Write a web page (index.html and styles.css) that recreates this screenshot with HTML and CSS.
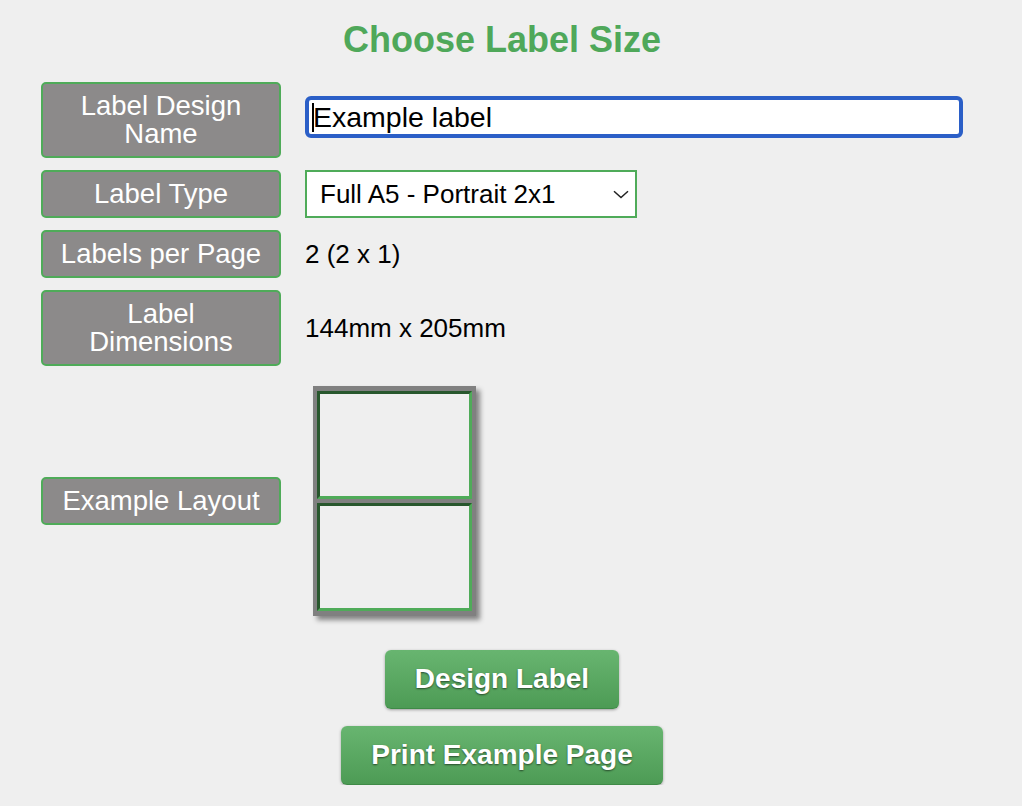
FILE: index.html
```html
<!DOCTYPE html>
<html lang="en">
<head>
<meta charset="utf-8">
<title>Choose Label Size</title>
<link rel="stylesheet" href="styles.css">
</head>
<body>
<div class="page">
  <h1 class="title">Choose Label Size</h1>
  <div class="form">
    <div class="label">Label Design Name</div>
    <div class="field">
      <div class="input-wrap">
        <input class="text-input" type="text" value="Example label">
        <span class="caret"></span>
      </div>
    </div>

    <div class="label">Label Type</div>
    <div class="field">
      <div class="select-wrap">
        <select class="select">
          <option>Full A5 - Portrait 2x1</option>
        </select>
        <svg class="chevron" width="16" height="9" viewBox="0 0 16 9"><path d="M1 1.2 L8 7.6 L15 1.2" fill="none" stroke="#222" stroke-width="1.5"/></svg>
      </div>
    </div>

    <div class="label">Labels per Page</div>
    <div class="field value">2 (2 x 1)</div>

    <div class="label">Label Dimensions</div>
    <div class="field value">144mm x 205mm</div>

    <div class="label">Example Layout</div>
    <div class="field">
      <div class="preview">
        <div class="cell"></div>
        <div class="cell"></div>
      </div>
    </div>
  </div>
  <div class="buttons">
    <button class="btn">Design Label</button>
    <button class="btn">Print Example Page</button>
  </div>
</div>
</body>
</html>
```

FILE: styles.css
```css
html, body {
  margin: 0;
  padding: 0;
  background: #efefef;
  font-family: "Liberation Sans", Arial, Helvetica, sans-serif;
}

.page {
  width: 922px;
  margin-left: 41px;
}

.title {
  margin: 20px 0 0 0;
  text-align: center;
  font-size: 36px;
  line-height: 40px;
  font-weight: bold;
  color: #4fa85a;
}

.form {
  margin-top: 22px;
  display: grid;
  grid-template-columns: 240px 1fr;
  column-gap: 24px;
  row-gap: 12px;
  align-items: center;
}

.label {
  box-sizing: border-box;
  background: #8c8a8a;
  border: 2px solid #4fab59;
  border-radius: 5px;
  color: #ffffff;
  text-align: center;
  font-size: 27.5px;
  line-height: 28px;
  padding: 8px 12px;
}

.field {
  display: flex;
  align-items: center;
}

.value {
  font-size: 26px;
  color: #000;
}

.input-wrap {
  position: relative;
  width: 100%;
  margin-bottom: 6px;
}

.text-input {
  box-sizing: border-box;
  width: 100%;
  height: 42px;
  border: 4px solid #2b5fc7;
  border-radius: 6px;
  background: #fff;
  padding: 0 4px;
  font-family: "Liberation Sans", Arial, Helvetica, sans-serif;
  font-size: 28.5px;
  color: #000;
  outline: none;
}

.caret {
  position: absolute;
  left: 7px;
  top: 7px;
  width: 2px;
  height: 29px;
  background: #000;
}

.select-wrap {
  position: relative;
  width: 332px;
}

.select {
  box-sizing: border-box;
  width: 332px;
  height: 48px;
  border: 2px solid #4fab59;
  border-radius: 0;
  background: #fff;
  padding: 0 0 0 13px;
  font-family: "Liberation Sans", Arial, Helvetica, sans-serif;
  font-size: 26px;
  color: #000;
  appearance: none;
  -webkit-appearance: none;
  outline: none;
}

.chevron {
  position: absolute;
  right: 8px;
  top: 20px;
  pointer-events: none;
}

.preview {
  margin: 8px 0 8px 8px;
  width: 163px;
  box-sizing: border-box;
  background: #808080;
  padding: 5px 4px;
  display: flex;
  flex-direction: column;
  gap: 4px;
  box-shadow: 4px 4px 5px rgba(0, 0, 0, 0.45);
}

.cell {
  box-sizing: border-box;
  height: 108px;
  background: #efefef;
  border: 3px inset #4fab59;
}

.buttons {
  margin-top: 26px;
  display: flex;
  flex-direction: column;
  align-items: center;
  gap: 17px;
}

.btn {
  font-family: "Liberation Sans", Arial, Helvetica, sans-serif;
  font-size: 28px;
  line-height: 32px;
  font-weight: bold;
  color: #fff;
  padding: 13px 30px;
  border: none;
  border-bottom: 1px solid #3f8a47;
  border-radius: 6px;
  background: linear-gradient(to bottom, #68b570, #4d9b55);
  text-shadow: 0 1px 2px rgba(0, 0, 0, 0.55);
  box-shadow: 0 1px 3px rgba(0, 0, 0, 0.35);
  cursor: pointer;
}
```
